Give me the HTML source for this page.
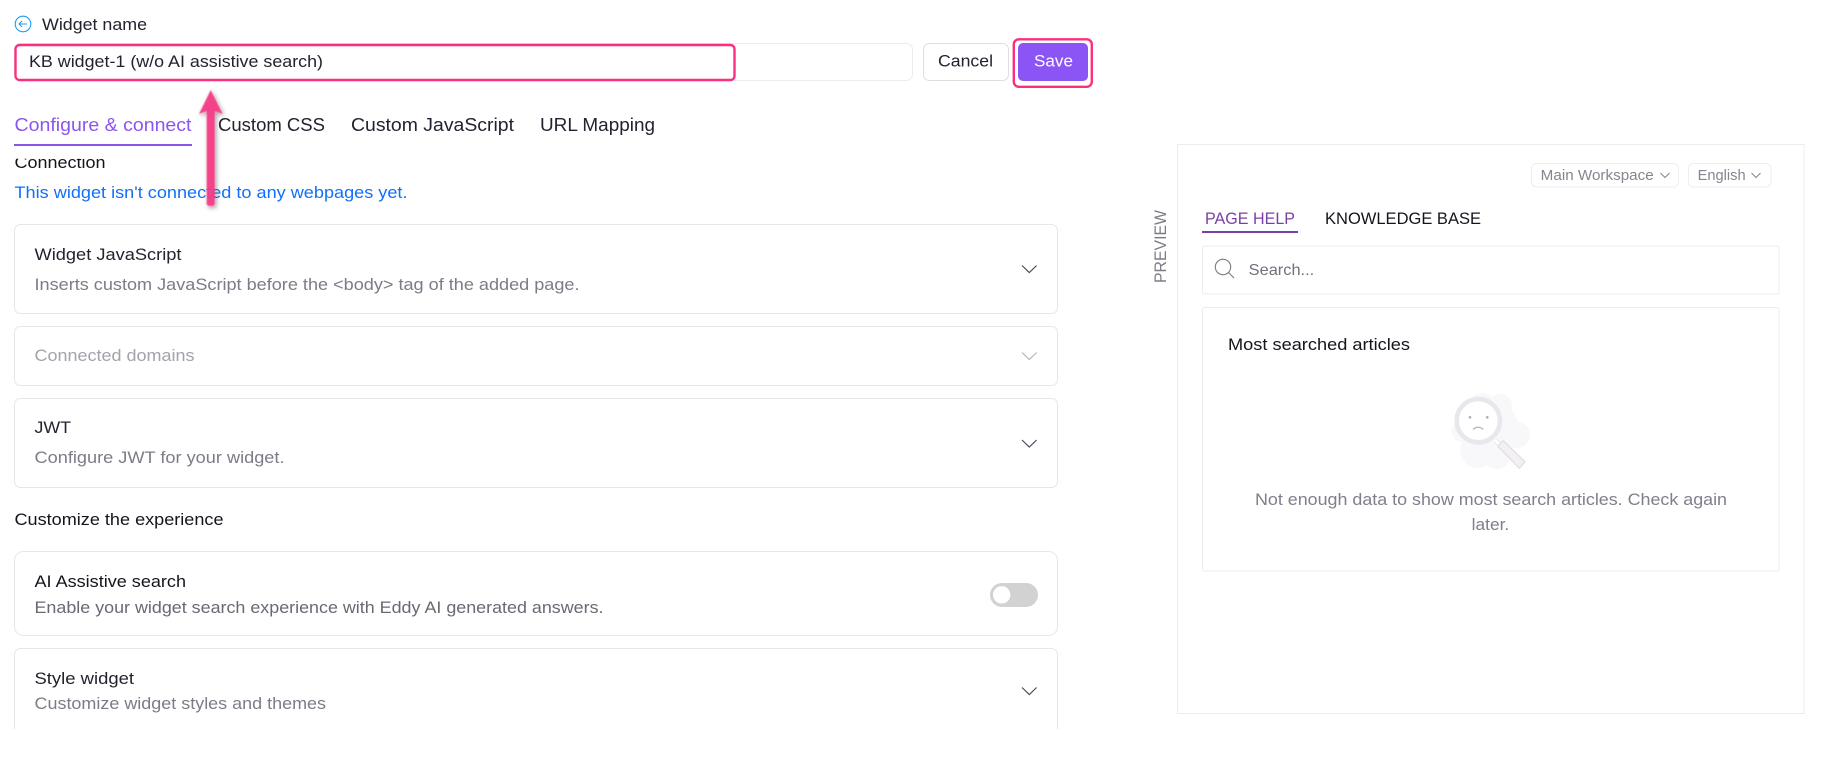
<!DOCTYPE html>
<html><head><meta charset="utf-8"><title>Widget</title>
<style>
html,body{margin:0;padding:0;background:#fff;width:1840px;height:764px;overflow:hidden}
svg{display:block}
text{font-family:"Liberation Sans",sans-serif;font-size:17px;fill:#23232f;white-space:pre}
.g{fill:#7c7c88}
.k{fill:#14141c}
.s{font-size:15px;fill:#85858f}
</style></head><body>
<svg width="1840" height="764" viewBox="0 0 1840 764" xmlns="http://www.w3.org/2000/svg">
<defs><filter id="sh" x="-100%" y="-20%" width="300%" height="140%"><feGaussianBlur in="SourceGraphic" stdDeviation=".5" result="b"/><feDropShadow in="b" dx="1.5" dy="2" stdDeviation="2.4" flood-color="#000" flood-opacity=".42"/></filter>
<clipPath id="c1"><rect x="0" y="158.8" width="400" height="30"/></clipPath>
<clipPath id="c2"><rect x="0" y="600" width="1100" height="129"/></clipPath></defs>

<!-- header -->
<circle cx="23" cy="24" r="7.8" fill="none" stroke="#1c9cf0" stroke-width="1.1"/>
<path d="M27 24H19.2M22 21L19 24L22 27" fill="none" stroke="#1c9cf0" stroke-width="1"/>
<text x="42" y="30" textLength="105" lengthAdjust="spacingAndGlyphs">Widget name</text>

<rect x="14.5" y="43.5" width="898" height="37" rx="6" fill="#fff" stroke="#ececef"/>
<rect x="15.5" y="45" width="719" height="35" rx="4" fill="#fff" stroke="#fb2f7e" stroke-width="2.4"/>
<text x="29" y="67" textLength="294" lengthAdjust="spacingAndGlyphs">KB widget-1 (w/o AI assistive search)</text>
<rect x="923.5" y="43.5" width="85" height="37" rx="6" fill="#fff" stroke="#dededf"/>
<text x="938" y="66.5" textLength="55" lengthAdjust="spacingAndGlyphs">Cancel</text>
<rect x="1013.8" y="39.3" width="78" height="47.5" rx="5" fill="#fff" stroke="#fb2f7e" stroke-width="2.4"/>
<rect x="1018" y="43" width="70" height="38" rx="5" fill="#8b55f6"/>
<text x="1034" y="66.5" textLength="39" lengthAdjust="spacingAndGlyphs" style="fill:#fff">Save</text>

<!-- tabs -->
<text x="14.5" y="131" textLength="177" lengthAdjust="spacingAndGlyphs" style="fill:#8b55ee;font-size:18px">Configure &amp; connect</text>
<rect x="14" y="144" width="178" height="2" fill="#8a55ea"/>
<text x="218" y="131" textLength="107" lengthAdjust="spacingAndGlyphs" style="font-size:18px">Custom CSS</text>
<text x="351" y="131" textLength="163" lengthAdjust="spacingAndGlyphs" style="font-size:18px">Custom JavaScript</text>
<text x="540" y="131" textLength="115" lengthAdjust="spacingAndGlyphs" style="font-size:18px">URL Mapping</text>

<text x="14.5" y="168" textLength="91" lengthAdjust="spacingAndGlyphs" clip-path="url(#c1)" class="k">Connection</text>
<text x="14.5" y="198" textLength="393" lengthAdjust="spacingAndGlyphs" style="fill:#1170fa">This widget isn't connected to any webpages yet.</text>

<!-- cards -->
<rect x="14.5" y="224.5" width="1043" height="89" rx="6" fill="#fff" stroke="#e6e6ec"/>
<text x="34.5" y="260" textLength="147" lengthAdjust="spacingAndGlyphs">Widget JavaScript</text>
<text x="34.5" y="290" textLength="545" lengthAdjust="spacingAndGlyphs" class="g">Inserts custom JavaScript before the &lt;body&gt; tag of the added page.</text>
<path d="M1022 265.5L1029.3 272.5L1036.6 265.5" fill="none" stroke="#4a4a58" stroke-width="1.2"/>

<rect x="14.5" y="326.5" width="1043" height="59" rx="6" fill="#fff" stroke="#e6e6ec"/>
<text x="34.5" y="361" textLength="160" lengthAdjust="spacingAndGlyphs" style="fill:#a3a3ab">Connected domains</text>
<path d="M1022 352.5L1029.3 359.5L1036.6 352.5" fill="none" stroke="#b5b5bc" stroke-width="1.2"/>

<rect x="14.5" y="398.5" width="1043" height="89" rx="6" fill="#fff" stroke="#e6e6ec"/>
<text x="34.5" y="433" textLength="36.5" lengthAdjust="spacingAndGlyphs">JWT</text>
<text x="34.5" y="463" textLength="250" lengthAdjust="spacingAndGlyphs" class="g">Configure JWT for your widget.</text>
<path d="M1022 440L1029.3 447L1036.6 440" fill="none" stroke="#4a4a58" stroke-width="1.2"/>

<text x="14.5" y="525" textLength="209" lengthAdjust="spacingAndGlyphs" class="k">Customize the experience</text>

<rect x="14.5" y="551.5" width="1043" height="84" rx="9" fill="#fff" stroke="#e6e6ec"/>
<text x="34.5" y="587" textLength="151.5" lengthAdjust="spacingAndGlyphs" class="k">AI Assistive search</text>
<text x="34.5" y="613" textLength="569" lengthAdjust="spacingAndGlyphs" style="fill:#696974">Enable your widget search experience with Eddy AI generated answers.</text>
<rect x="990" y="583" width="48" height="24" rx="12" fill="#d2d2d2"/>
<circle cx="1001.7" cy="594.8" r="8.7" fill="#fff"/>

<g clip-path="url(#c2)">
<rect x="14.5" y="648.5" width="1043" height="120" rx="6" fill="#fff" stroke="#e6e6ec"/>
</g>
<text x="34.5" y="684" textLength="99.5" lengthAdjust="spacingAndGlyphs">Style widget</text>
<text x="34.5" y="709" textLength="291.5" lengthAdjust="spacingAndGlyphs" class="g">Customize widget styles and themes</text>
<path d="M1022 687.5L1029.3 694.5L1036.6 687.5" fill="none" stroke="#4a4a58" stroke-width="1.2"/>

<!-- preview -->
<text transform="translate(1166 283) rotate(-90)" textLength="73" lengthAdjust="spacingAndGlyphs" style="font-size:17px;fill:#7d7d88">PREVIEW</text>
<rect x="1177.5" y="144.5" width="626.5" height="569" fill="#fff" stroke="#ececef"/>

<rect x="1531.5" y="163.5" width="147" height="23.5" rx="5" fill="#fff" stroke="#eeeef0"/>
<text x="1540.7" y="180" textLength="113" lengthAdjust="spacingAndGlyphs" class="s">Main Workspace</text>
<path d="M1660.5 173L1665 177.5L1669.5 173" fill="none" stroke="#85858f" stroke-width="1"/>
<rect x="1688.5" y="163.5" width="82.5" height="23.5" rx="5" fill="#fff" stroke="#eeeef0"/>
<text x="1697.6" y="180" textLength="48" lengthAdjust="spacingAndGlyphs" class="s">English</text>
<path d="M1751.5 173L1756 177.5L1760.5 173" fill="none" stroke="#85858f" stroke-width="1"/>

<text x="1205" y="224" textLength="90" lengthAdjust="spacingAndGlyphs" style="fill:#7b3fa6">PAGE HELP</text>
<rect x="1202" y="231" width="96" height="2" fill="#7b3fa6"/>
<text x="1325" y="224" textLength="156" lengthAdjust="spacingAndGlyphs" class="k">KNOWLEDGE BASE</text>

<rect x="1202.5" y="246" width="576.5" height="48" rx="2" fill="#fff" stroke="#ececef"/>
<circle cx="1223" cy="267" r="7.7" fill="none" stroke="#7c7c85" stroke-width="1.1"/>
<path d="M1228.5 272.5L1234 278" fill="none" stroke="#7c7c85" stroke-width="1.1"/>
<text x="1248.7" y="275" textLength="65.5" lengthAdjust="spacingAndGlyphs" style="font-size:16px;fill:#71717b">Search...</text>

<rect x="1202.5" y="307.5" width="576.5" height="263.5" rx="2" fill="#fff" stroke="#ececef"/>
<text x="1228" y="350" textLength="182" lengthAdjust="spacingAndGlyphs" class="k">Most searched articles</text>

<!-- illustration -->
<g fill="#f8f7fa">
<circle cx="1482" cy="405" r="12"/><circle cx="1500" cy="406" r="12"/><circle cx="1500" cy="425" r="18"/><circle cx="1517" cy="435" r="13"/>
<circle cx="1478" cy="450" r="18"/><circle cx="1497" cy="456" r="13"/><circle cx="1462" cy="432" r="10"/>
</g>
<path d="M1495 440L1500 445" stroke="#e9e8ec" stroke-width="5"/>
<path d="M1495 440L1500 445" stroke="#fff" stroke-width="3"/>
<path d="M1497.7 446L1503.3 440.7L1525 461.7L1519.3 468.3Z" fill="#f2f0f4" stroke="#e2e0e6" stroke-width="1.4" stroke-linejoin="round"/>
<circle cx="1478.3" cy="420.7" r="21.6" fill="#fff" stroke="#e8e7eb" stroke-width="4.6"/>
<circle cx="1470" cy="417.3" r="1.3" fill="#aaa8b2"/><circle cx="1487.3" cy="417.3" r="1.3" fill="#aaa8b2"/>
<path d="M1473 429.5Q1478 425 1483.3 429.5" fill="none" stroke="#b3b1ba" stroke-width="1.2"/>

<text x="1255" y="505" textLength="472" lengthAdjust="spacingAndGlyphs" style="fill:#7f7f8b">Not enough data to show most search articles. Check again</text>
<text x="1471.7" y="530" textLength="37.500" lengthAdjust="spacingAndGlyphs" style="fill:#7f7f8b">later.</text>

<!-- arrow -->
<path d="M210.7 90L222.7 114L214.7 111V203.5Q214.7 206 210.7 206Q206.7 206 206.7 203.5V111L199 114Z" fill="#f43b86" fill-opacity=".95" filter="url(#sh)"/>
</svg>
</body></html>
